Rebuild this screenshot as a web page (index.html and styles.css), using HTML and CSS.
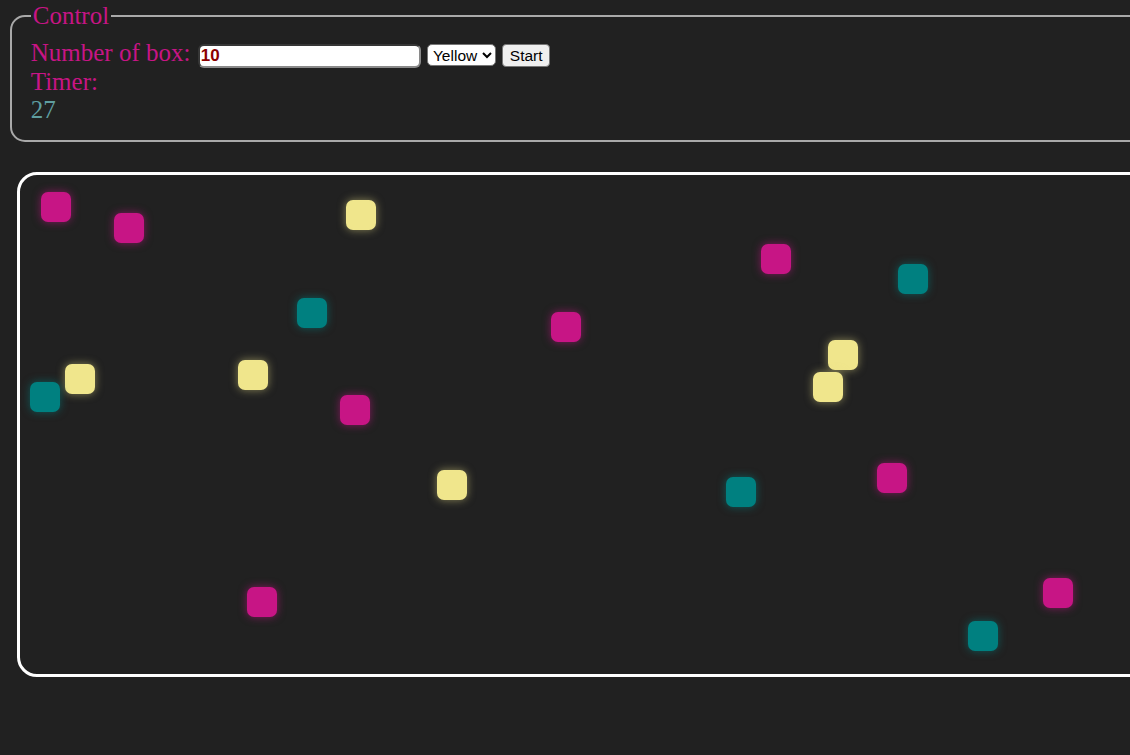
FILE: index.html
```html
<!DOCTYPE html>
<html>
<head>
<meta charset="utf-8">
<title>Boxes</title>
<link rel="stylesheet" href="styles.css">
</head>
<body>
<div class="frame">
<fieldset class="control">
  <legend class="legend">Control</legend>
  <div class="row">
    <label class="label" for="count">Number of box:</label>
    <input class="count" id="count" type="text" value="10">
    <select class="color">
      <option>Yellow</option>
      <option>Pink</option>
      <option>Teal</option>
    </select>
    <button class="start" type="button">Start</button>
  </div>
  <div class="label">Timer:</div>
  <div class="timer">27</div>
</fieldset>

<div class="board">
  <div class="box pink" style="left:21px;top:17px"></div>
  <div class="box pink" style="left:94px;top:38px"></div>
  <div class="box yellow" style="left:326px;top:25px"></div>
  <div class="box pink" style="left:741px;top:69px"></div>
  <div class="box teal" style="left:878px;top:89px"></div>
  <div class="box teal" style="left:277px;top:123px"></div>
  <div class="box pink" style="left:531px;top:137px"></div>
  <div class="box yellow" style="left:808px;top:165px"></div>
  <div class="box yellow" style="left:45px;top:189px"></div>
  <div class="box teal" style="left:10px;top:207px"></div>
  <div class="box yellow" style="left:218px;top:185px"></div>
  <div class="box yellow" style="left:793px;top:197px"></div>
  <div class="box pink" style="left:320px;top:220px"></div>
  <div class="box yellow" style="left:417px;top:295px"></div>
  <div class="box teal" style="left:706px;top:302px"></div>
  <div class="box pink" style="left:857px;top:288px"></div>
  <div class="box pink" style="left:227px;top:412px"></div>
  <div class="box pink" style="left:1023px;top:403px"></div>
  <div class="box teal" style="left:948px;top:446px"></div>
</div>
</div>
</body>
</html>
```

FILE: styles.css
```css
html, body {
  margin: 0;
  background: #212121;
}
body {
  font-family: "Liberation Serif", "Times New Roman", serif;
  color: #c71585;
}
.frame {
  width: 100%;
  box-sizing: border-box;
  overflow: hidden;
  padding: 8px 0 8px 8px;
}
.control {
  margin: 0 2px;
  width: 1300px;
  font-size: 25px;
  border: 2px solid #a9a9a9;
  border-radius: 15px;
  padding: 0.35em 0.75em calc(0.625em + 1px);
}
.legend {
  padding: 0 2px;
  line-height: 16px;
}
.row {
  margin-top: 6px;
}
.label {
  color: #c71585;
}
.row .label {
  margin-right: 1px;
}
.count {
  width: 218px;
  height: 20px;
  box-sizing: content-box;
  padding: 0 0 0 1px;
  border: 2px inset #8a8a8a;
  border-radius: 6px;
  background: #fff;
  color: #8b0000;
  font-family: "Liberation Sans", Arial, sans-serif;
  font-weight: bold;
  font-size: 17px;
  margin: 0;
  vertical-align: baseline;
}
.color {
  height: 22px;
  width: 69px;
  border: 1px solid #767676;
  border-radius: 5px;
  background: #fff;
  color: #000;
  font-family: "Liberation Sans", Arial, sans-serif;
  font-size: 15.5px;
  padding: 0 0 0 1px;
  margin: 0;
}
.start {
  height: 23px;
  width: 48px;
  border: 1px solid #767676;
  border-radius: 4px;
  background: #efefef;
  color: #000;
  font-family: "Liberation Sans", Arial, sans-serif;
  font-size: 15.5px;
  padding: 0;
  margin: 0;
}
.timer {
  color: #5f9ea0;
}
.board {
  position: relative;
  margin: 30px 0 0 9px;
  width: 1200px;
  height: 499px;
  border: 3px solid #fff;
  border-radius: 20px;
}
.box {
  position: absolute;
  width: 30px;
  height: 30px;
  border-radius: 7px;
}
.pink {
  background: #c71585;
  box-shadow: 0 0 8px rgba(199, 21, 133, 0.6);
}
.teal {
  background: #008080;
  box-shadow: 0 0 8px rgba(0, 128, 128, 0.6);
}
.yellow {
  background: #f0e68c;
  box-shadow: 0 0 8px rgba(240, 230, 140, 0.5);
}
```
